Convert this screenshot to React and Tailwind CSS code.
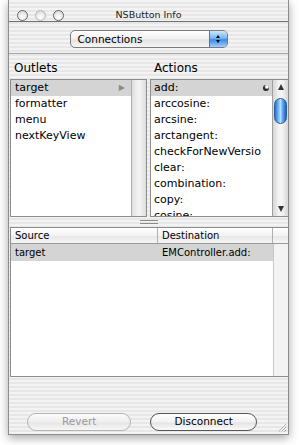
const outlets = ["target", "formatter", "menu", "nextKeyView"];
const actions = [
  "add:",
  "arccosine:",
  "arcsine:",
  "arctangent:",
  "checkForNewVersio",
  "clear:",
  "combination:",
  "copy:",
  "cosine:",
];

const stripes =
  "bg-[repeating-linear-gradient(180deg,#f3f3f3_0px,#f3f3f3_2px,#e7e7e7_2px,#e7e7e7_4px)]";

const Light = ({ dim }) => (
  <div
    className={`w-[11px] h-[11px] rounded-full border-[1.5px] ${
      dim ? "border-[#b8b8b8]" : "border-[#666]"
    } bg-[radial-gradient(circle_at_50%_70%,#ffffff_0%,#e6e6e6_60%,#c8c8c8_100%)]`}
  />
);

const Scroller = () => (
  <div className="w-[16px] flex flex-col items-center border-l border-[#a0a0a0] bg-[linear-gradient(90deg,#d6d6d6,#f4f4f4_40%,#f4f4f4_60%,#d6d6d6)]">
    <div className="mt-[4px] w-0 h-0 border-l-[3.5px] border-r-[3.5px] border-b-[6px] border-l-transparent border-r-transparent border-b-[#333]" />
    <div className="mt-[8px] w-[13px] h-[26px] rounded-full border border-[#2a5c99] bg-[linear-gradient(90deg,#2b6fcb,#7dc0fb_35%,#b9e0ff_50%,#5aa6f2_70%,#1e5fbf)]" />
    <div className="flex-1" />
    <div className="mb-[4px] w-0 h-0 border-l-[3.5px] border-r-[3.5px] border-t-[6px] border-l-transparent border-r-transparent border-t-[#333]" />
  </div>
);

const App = () => {
  return (
    <div
      className="w-[299px] h-[445px] bg-white pl-[8px] overflow-hidden"
      style={{ fontFamily: '"DejaVu Sans", "Liberation Sans", sans-serif' }}
    >
      <div
        className={`w-[281px] h-[435px] border-x border-b border-[#8c8c8c] flex flex-col ${stripes} shadow-[0_3px_9px_rgba(0,0,0,0.35)]`}
      >
        {/* Title bar */}
        <div className="h-[22px] grid grid-cols-[1fr_auto_1fr] items-center pt-[8px] border-b border-[#6f6f6f]">
          <div className="flex gap-[7px] pl-[8px]">
            <Light />
            <Light dim />
            <Light />
          </div>
          <div className="text-[9.5px] text-[#222]">NSButton Info</div>
          <div />
        </div>

        {/* Popup */}
        <div className="h-[32px] flex justify-center pt-[8px] border-b border-[#a6a6a6]">
          <div className="w-[158px] h-[18px] flex rounded-[5px] border border-[#7a7a7a] bg-[linear-gradient(180deg,#ffffff,#f0f0f0_50%,#e2e2e2_55%,#f6f6f6)] overflow-hidden">
            <div className="flex-1 pl-[7px] text-[10.5px] leading-[16px] text-black">
              Connections
            </div>
            <div className="w-[18px] flex flex-col items-center justify-center gap-[2px] border-l border-[#4a78b0] bg-[linear-gradient(180deg,#cfe7ff,#79b6f3_45%,#3d8ae2_55%,#9fd0ff)]">
              <div className="w-0 h-0 border-l-[2.5px] border-r-[2.5px] border-b-[3px] border-l-transparent border-r-transparent border-b-black" />
              <div className="w-0 h-0 border-l-[2.5px] border-r-[2.5px] border-t-[3px] border-l-transparent border-r-transparent border-t-black" />
            </div>
          </div>
        </div>

        {/* Labels */}
        <div className="h-[25px] flex items-end pb-[2px] text-[12px] text-black">
          <div className="w-[142px] pl-[5px]">Outlets</div>
          <div className="pl-[3px]">Actions</div>
        </div>

        {/* Lists */}
        <div className="h-[138px] flex gap-[3px] pl-[1px]">
          <div className="w-[137px] flex border border-[#8c8c8c] bg-white">
            <div className="flex-1 overflow-hidden">
              {outlets.map((o, i) => (
                <div
                  key={o}
                  className={`h-[16px] flex items-center pl-[4px] pr-[6px] text-[11px] text-black ${
                    i === 0 ? "bg-[#d4d4d4]" : ""
                  }`}
                >
                  <span className="flex-1">{o}</span>
                  {i === 0 && <span className="text-[8px] text-[#8a8a8a]">▶</span>}
                </div>
              ))}
            </div>
            <div className="w-[15px] border-l border-[#b0b0b0] bg-[linear-gradient(90deg,#dcdcdc,#f2f2f2_40%,#f2f2f2_60%,#dcdcdc)]" />
          </div>
          <div className="flex-1 flex border border-[#8c8c8c] border-r-0 bg-white">
            <div className="flex-1 overflow-hidden">
              {actions.map((a, i) => (
                <div
                  key={a}
                  className={`h-[16px] flex items-center pl-[3px] pr-[3px] text-[11px] text-black whitespace-nowrap ${
                    i === 0 ? "bg-[#d4d4d4]" : ""
                  }`}
                >
                  <span className="flex-1">{a}</span>
                  {i === 0 && (
                    <span className="w-[6px] h-[6px] rounded-full bg-[radial-gradient(circle_at_65%_30%,#ffffff_0%,#ffffff_20%,#333_45%,#111_100%)]" />
                  )}
                </div>
              ))}
            </div>
            <Scroller />
          </div>
        </div>

        {/* Splitter */}
        <div className="h-[10px] flex flex-col items-center justify-center gap-[2px]">
          <div className="w-[18px] h-[1px] bg-[#8a8a8a]" />
          <div className="w-[18px] h-[1px] bg-[#8a8a8a]" />
        </div>

        {/* Table */}
        <div className="h-[150px] ml-[1px] flex flex-col border border-[#8c8c8c] border-r-0 bg-white">
          <div className="h-[16px] flex border-b border-[#9a9a9a] bg-[linear-gradient(180deg,#ffffff,#f3f3f3_50%,#e8e8e8_55%,#f6f6f6)] text-[10px] text-black">
            <div className="w-[147px] pl-[4px] leading-[15px] border-r border-[#b0b0b0]">
              Source
            </div>
            <div className="w-[115px] pl-[4px] leading-[15px] border-r border-[#b0b0b0]">
              Destination
            </div>
            <div className="flex-1" />
          </div>
          <div className="flex-1 flex">
            <div className="w-[262px]">
              <div className="h-[17px] flex items-center bg-[#d4d4d4] text-[10px] text-black">
                <div className="w-[147px] pl-[4px]">target</div>
                <div className="pl-[4px]">EMController.add:</div>
              </div>
            </div>
            <div className="flex-1 border-l border-[#c8c8c8] bg-[#f3f3f3]" />
          </div>
        </div>

        {/* Buttons */}
        <div className="flex-1 flex items-end pb-[3px] pl-[18px] gap-[19px]">
          <div className="w-[112px] h-[18px] rounded-full border border-[#b4b4b4] bg-[linear-gradient(180deg,#fbfbfb,#eeeeee_50%,#e6e6e6_55%,#f7f7f7)] flex items-center justify-center text-[10.5px] text-[#9a9a9a]">
            Revert
          </div>
          <div className="w-[114px] h-[18px] rounded-full border border-[#555] bg-[linear-gradient(180deg,#ffffff,#f2f2f2_50%,#e4e4e4_55%,#fafafa)] flex items-center justify-center text-[10.5px] text-black">
            Disconnect
          </div>
          <svg width="12" height="12" viewBox="0 0 12 12" className="ml-auto mr-[1px] self-end -mb-[2px]">
            <path d="M11 3 L3 11 M11 6 L6 11 M11 9 L9 11" stroke="#8a8a8a" strokeWidth="1" />
            <path d="M11 4 L4 11 M11 7 L7 11" stroke="#ffffff" strokeWidth="1" />
          </svg>
        </div>
      </div>
    </div>
  );
};

export default App;
